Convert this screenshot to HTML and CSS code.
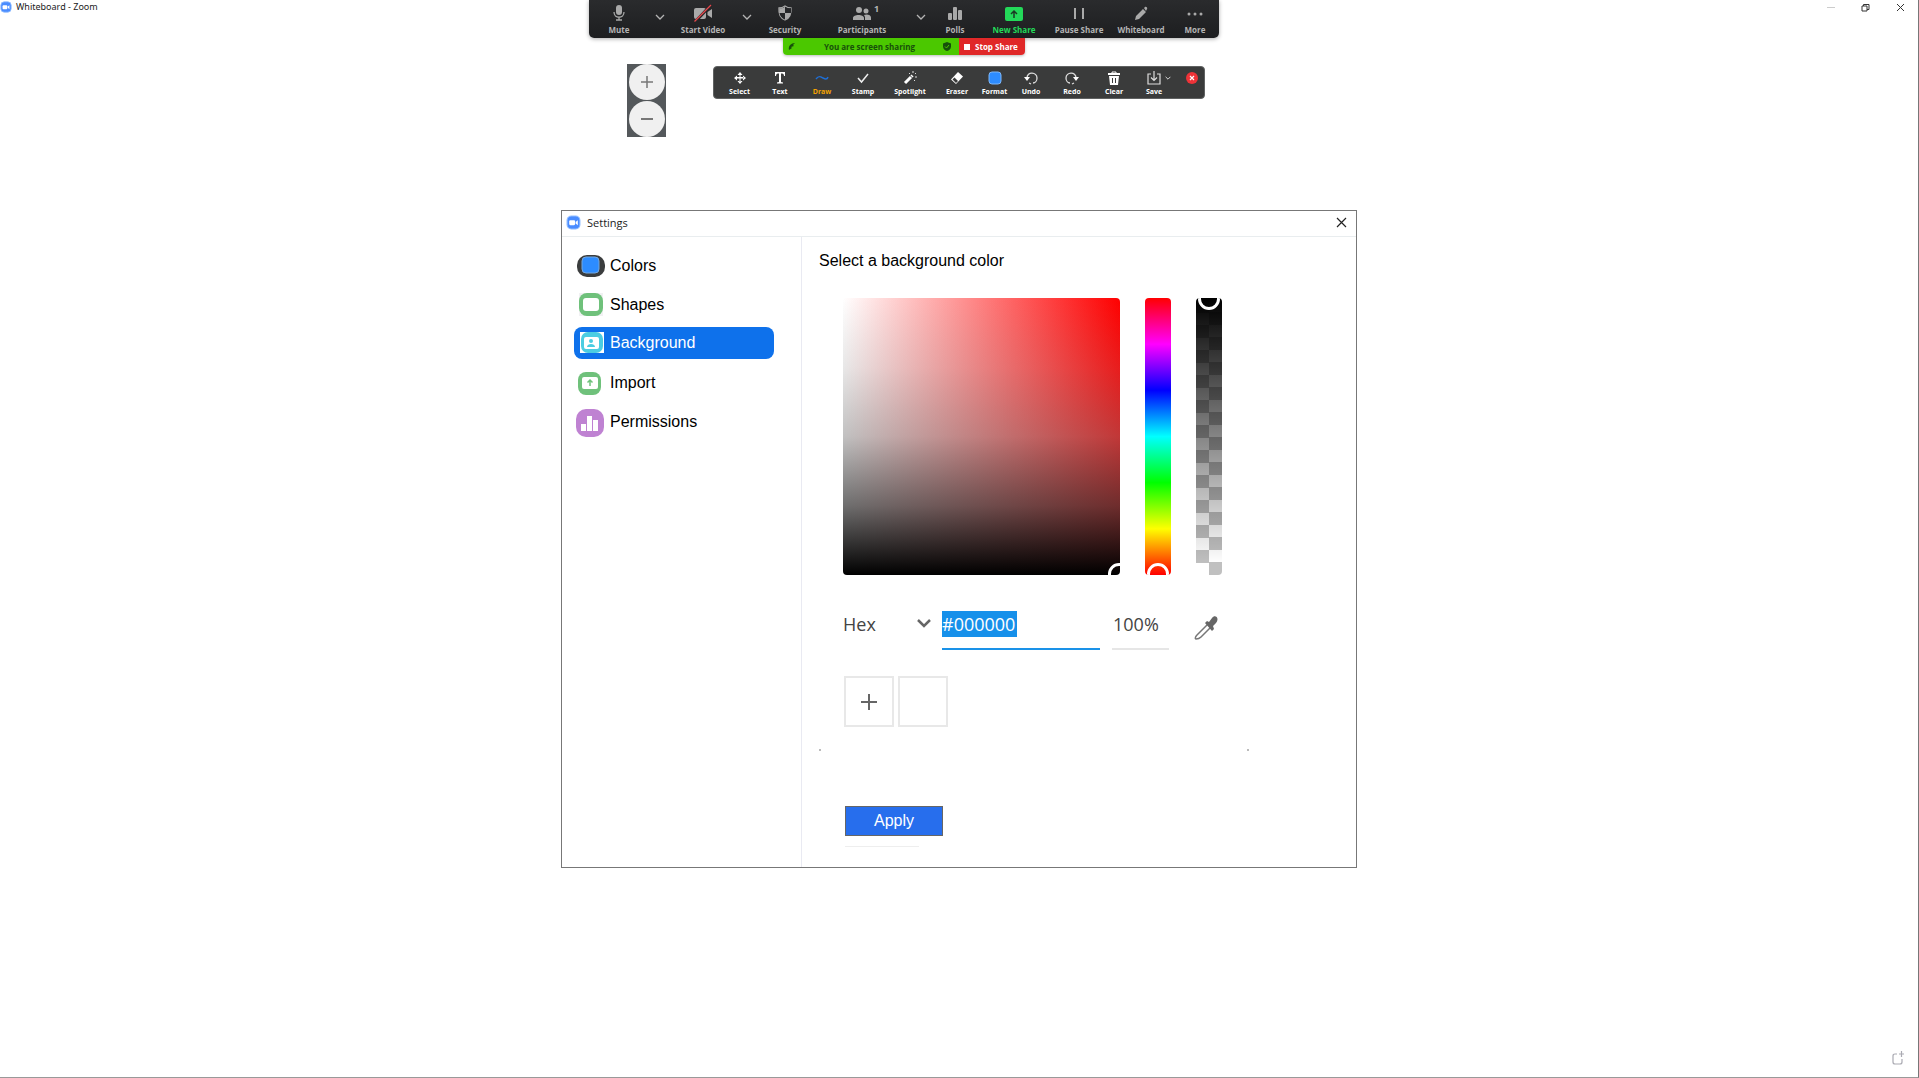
FILE: index.html
```html
<!DOCTYPE html>
<html lang="en">
<head>
<meta charset="utf-8">
<title>Whiteboard - Zoom</title>
<link rel="stylesheet" href="styles.css">
</head>
<body>
<svg class="defs" aria-hidden="true">
  <symbol id="logo" viewBox="0 0 14 14"><rect x="1" y="1" width="12" height="12" rx="4" fill="#4a8cff" stroke="#8fbcff"/><rect x="3" y="5" width="5.500" height="4.500" rx="1" fill="#fff"/><path d="M9 6.500 11 5v4.500L9 8z" fill="#fff"/></symbol>
  <symbol id="chevron" viewBox="0 0 10 6"><path d="M1 1l4 4 4-4" fill="none" stroke="currentColor" stroke-width="1.300"/></symbol>
</svg>

<header class="window-bar">
  <div class="window-title"><svg class="logo-small"><use href="#logo"/></svg><span>Whiteboard - Zoom</span></div>
  <div class="window-actions">
    <button class="faded" aria-label="Minimize"><svg width="8" height="8"><path d="M0 4.500h8" stroke="#ccc"/></svg></button>
    <button aria-label="Restore"><svg width="9" height="9" fill="none" stroke="#333"><path d="M1 3h5v5H1zM2.500 3V1.500h5.500v5H6"/></svg></button>
    <button aria-label="Close"><svg width="9" height="9" stroke="#333"><path d="M1 1l7 7M8 1 1 8"/></svg></button>
  </div>
</header>

<div class="meeting">
  <nav class="meeting-bar" aria-label="Meeting controls">
    <button><svg width="14" height="18" viewBox="0 0 14 18"><rect x="4" y="1" width="6" height="10" rx="3" fill="#a9a9a9"/><path d="M2 8c0 7 10 7 10 0M7 13v3M4 16h6" fill="none" stroke="#a9a9a9" stroke-width="1.300"/></svg><span>Mute</span></button>
    <button class="expand" aria-label="Audio options"><svg width="10" height="6"><use href="#chevron"/></svg></button>
    <button><svg width="20" height="18" viewBox="0 0 20 18"><rect x="1" y="4" width="12" height="11" rx="2" fill="#a9a9a9"/><path d="M14.500 8 19 5v9l-4.500-3z" fill="#a9a9a9"/><path d="M2 18 18 1" stroke="#252628" stroke-width="3"/><path d="M1.500 17.500 18 1" stroke="#e5484d" stroke-width="1.300"/></svg><span>Start Video</span></button>
    <button class="expand" aria-label="Video options"><svg width="10" height="6"><use href="#chevron"/></svg></button>
    <button><svg width="16" height="18" viewBox="0 0 16 18"><path d="M8 2c2 1.500 4 2 6 2 .5 6-1 10-6 12C3 14 1.500 10 2 4c2 0 4-.500 6-2z" fill="none" stroke="#a9a9a9" stroke-width="1.300"/><path d="M8 3v6h5.500c-.5 3-2 5-5.500 6.500zM8 9H2.500V4.500C5 4.500 6.500 4 8 3z" fill="#a9a9a9"/><path d="M8 3v6h6V4C11 4.500 9.500 4 8 3zM2.500 9H8v6.500C4.500 14 3 12 2.500 9z" fill="#252628"/><path d="M8 3v6H2.500V4.500C5 4.500 6.500 4 8 3zM8 9h5.500c-.5 3-2 5-5.500 6.500z" fill="#a9a9a9"/></svg><span>Security</span></button>
    <button class="people"><svg width="20" height="18" viewBox="0 0 20 18" fill="#a9a9a9"><circle cx="7" cy="6" r="3"/><circle cx="14" cy="7" r="2.500"/><path d="M1 16v-2c0-4 11-4 11 0v2zM13 16v-3l-1-2c3-1.500 7 0 7 2.500V16z"/></svg><span>Participants</span><sup>1</sup></button>
    <button class="expand" aria-label="Participant options"><svg width="10" height="6"><use href="#chevron"/></svg></button>
    <button><svg width="16" height="18" viewBox="0 0 16 18" fill="#a9a9a9"><rect x="1" y="9" width="4" height="7" rx="1"/><rect x="6" y="3" width="4" height="13" rx="1"/><rect x="11" y="6" width="4" height="10" rx="1"/></svg><span>Polls</span></button>
    <button class="share"><svg width="18" height="18" viewBox="0 0 18 18"><rect y="3" width="18" height="14" rx="2" fill="#23d959"/><path d="M9 14V7M6 10l3-3 3 3" fill="none" stroke="#1b3a24" stroke-width="1.500"/></svg><span>New Share</span></button>
    <button><svg width="14" height="18" fill="#a9a9a9"><rect x="2" y="4" width="2" height="11"/><rect x="10" y="4" width="2" height="11"/></svg><span>Pause Share</span></button>
    <button><svg width="14" height="18" viewBox="0 0 14 18" fill="#a9a9a9"><path d="M1 16l1-4 7-7 3 3-7 7zM10 4l1-1c1-1 3 1 2 2l-1 2z"/></svg><span>Whiteboard</span></button>
    <button><svg width="16" height="18" fill="#a9a9a9"><circle cx="2" cy="10" r="1.500"/><circle cx="8" cy="10" r="1.500"/><circle cx="14" cy="10" r="1.500"/></svg><span>More</span></button>
  </nav>
  <div class="share-status">
    <div class="sharing"><svg width="8" height="9"><path d="M1 8C0 4 3 1 7 1L5 3l1 1-3 1 1 1z" fill="#17500b"/></svg><span>You are screen sharing</span><svg width="8" height="9"><path d="M4 0l4 1.500v3C8 7 6 8.500 4 9 2 8.500 0 7 0 4.500v-3z" fill="#17500b"/><path d="M2 4.500 3.500 6 6 3" fill="none" stroke="#4bc800"/></svg></div>
    <button class="stop"><i></i>Stop Share</button>
  </div>
</div>

<nav class="annotate-bar" aria-label="Annotation tools">
  <button><svg width="14" height="14" viewBox="0 0 14 14" fill="#fff"><path d="M7 1l2.500 3h-5zM7 13l2.500-3h-5zM1 7l3-2.500v5zM13 7l-3-2.500v5zM6.500 3h1v3h3v1.500h-3v3h-1v-3h-3V6h3z"/></svg><span>Select</span></button>
  <button><svg width="14" height="14" viewBox="0 0 14 14" fill="#fff"><path d="M2 1h10v4h-1c0-2-1-2.500-3-2.500V11l2 .500v1H4v-1l2-.500V2.500C4 2.500 3 3 3 5H2z"/></svg><span>Text</span></button>
  <button class="current"><svg width="14" height="14"><path d="M1 8c3-4 5-2 7-1s4 2 5-1" fill="none" stroke="#1f6fd6" stroke-width="1.500"/></svg><span>Draw</span></button>
  <button><svg width="14" height="14"><path d="M2 7l3.500 4L12 3" fill="none" stroke="#eee" stroke-width="1.500"/></svg><span>Stamp</span></button>
  <button><svg width="14" height="14" viewBox="0 0 14 14"><path d="M2 12l6-6" stroke="#fff" stroke-width="3"/><path d="M8.500 5.500l1-1" stroke="#fff" stroke-width="3"/><path d="M6 2l1 1M10 0v2M13 2l-1 1M12 6h2M11 9l1 1" stroke="#ddd"/></svg><span>Spotlight</span></button>
  <button><svg width="14" height="14" viewBox="0 0 14 14"><path d="M1 8.500 8 1l5 4.500L6 13z" fill="#fff"/><path d="M2.500 8.500 4.500 6.500 8 10l-2 2z" fill="#3a3b3b"/></svg><span>Eraser</span></button>
  <button><svg width="14" height="14"><rect x="1" y="1" width="12" height="12" rx="3" fill="#2d8cff" stroke="#7db6f7"/></svg><span>Format</span></button>
  <button><svg width="14" height="14"><path d="M3 7c0-7 10-6 10 0 0 3-2 5-4 5M5 12l2 1" fill="none" stroke="#ddd" stroke-width="1.300"/><path d="M0 6h6l-3 4z" fill="#fff"/></svg><span>Undo</span></button>
  <button><svg width="14" height="14"><path d="M11 7C11 0 1 1 1 7c0 3 2 5 4 5M9 12l-2 1" fill="none" stroke="#ddd" stroke-width="1.300"/><path d="M8 6h6l-3 4z" fill="#fff"/></svg><span>Redo</span></button>
  <button><svg width="14" height="14"><path d="M5 2V1h4v1" fill="none" stroke="#fff"/><path d="M1 2h12v2H1zM2 5h10l-1 9H3z" fill="#fff"/><path d="M5.500 7v5M8.500 7v5" stroke="#3a3b3b"/></svg><span>Clear</span></button>
  <button class="save"><svg width="14" height="14"><path d="M4 3H1v10h12V3h-3M7 0v9M4 6.500l3 3 3-3" fill="none" stroke="#ddd" stroke-width="1.200"/></svg><span>Save</span><svg class="save-more" width="6" height="4"><use href="#chevron"/></svg></button>
  <button class="close-tools" aria-label="Close annotation tools"><svg width="12" height="12"><circle cx="6" cy="6" r="6" fill="#ee3338"/><path d="M4 4l4 4M8 4 4 8" stroke="#fff" stroke-width="1.200"/></svg></button>
</nav>

<div class="zoom-control">
  <button aria-label="Zoom in"><svg width="12" height="12"><path d="M0 6h12M6 0v12" stroke="#777" stroke-width="1.500"/></svg></button>
  <button aria-label="Zoom out"><svg width="12" height="12"><path d="M0 6h12" stroke="#777" stroke-width="2"/></svg></button>
</div>

<main class="dialog" role="dialog" aria-labelledby="dialog-title">
  <header class="dialog-bar">
    <svg class="logo"><use href="#logo"/></svg>
    <h1 id="dialog-title">Settings</h1>
    <button class="dialog-close" aria-label="Close settings"><svg width="11" height="11"><path d="M1 1l9 9M10 1l-9 9" stroke="#222" stroke-width="1.200"/></svg></button>
  </header>
  <div class="dialog-body">
    <nav class="sections" aria-label="Settings sections">
      <button><svg width="30" height="30"><rect x="1" y="4" width="28" height="22" rx="10" fill="#3b3d3e"/><rect x="6" y="6" width="17" height="16" rx="4" fill="#2d8cff" stroke="#75a7dd"/></svg>Colors</button>
      <button><svg width="30" height="30"><rect x="3" y="3" width="24" height="23" fill="#f1f1f3"/><rect x="3" y="3" width="24" height="23" rx="8" fill="#6fc17b"/><rect x="7" y="8" width="16" height="13" rx="3" fill="#fff"/></svg>Shapes</button>
      <button class="selected"><svg width="30" height="30"><rect x="4" y="4" width="24" height="21" fill="#fff"/><rect x="5" y="4" width="22" height="21" rx="7" fill="#4bcde2"/><rect x="8" y="9" width="15" height="12" rx="2" fill="#fff"/><circle cx="15" cy="13" r="2" fill="#4bcde2"/><path d="M11 19c0-4 8-4 8 0z" fill="#4bcde2"/></svg>Background</button>
      <button><svg width="30" height="30"><rect x="2" y="4" width="23" height="23" rx="8" fill="#6fc17b"/><rect x="6" y="9" width="16" height="12" rx="2" fill="#fff"/><path d="M14 18v-5M11.500 14.500 14 12l2.500 2.500" fill="none" stroke="#6fc17b" stroke-width="1.500"/></svg>Import</button>
      <button><svg width="30" height="30"><rect x="0" y="2" width="28" height="28" rx="10" fill="#bf82d2"/><path d="M5 17h5v7H5zM11 9h5v15h-5zM17 13h5v11h-5z" fill="#fff"/></svg>Permissions</button>
    </nav>
    <section class="panel">
      <h2>Select a background color</h2>
      <div class="picker">
        <div class="spectrum"><div class="shade"><i class="ring"></i></div>
          <div class="slider hue"><input type="range" min="0" max="360" value="0" aria-label="Hue"></div>
          <div class="slider alpha"><input type="range" min="0" max="100" value="100" aria-label="Opacity"></div>
        </div>
        <div class="values">
          <div class="format"><select aria-label="Color format"><option>Hex</option></select><svg width="14" height="9" viewBox="0 0 14 9"><path d="M1 1l6 6 6-6" fill="none" stroke="#666" stroke-width="2.500"/></svg></div>
          <div class="code"><input type="text" value="#000000" aria-label="Color code"></div>
          <div class="opacity"><input type="text" value="100%" aria-label="Opacity percent"></div>
          <button class="dropper" aria-label="Pick a color"><svg width="24" height="26" viewBox="0 0 24 26"><path d="M14 9 3 20c-2 2-2 4-1 4s3 0 5-2l10-10" fill="none" stroke="#777" stroke-width="1.500"/><path d="M11 8l2-2 2 1 3-4c3-4 8 0 4 5l-3 3 1 3-2 2z" fill="#666"/></svg></button>
        </div>
        <div class="swatches">
          <button aria-label="Add color"><svg width="16" height="16"><path d="M0 8h16M8 0v16" stroke="#666" stroke-width="2"/></svg></button>
          <button aria-label="White"></button>
        </div>
      </div>
      <button class="apply">Apply</button>
      <hr>
    </section>
  </div>
</main>
<button class="new-page" aria-label="New page"><svg width="14" height="14"><path d="M6 3H4Q2 3 2 5v6q0 2 2 2h5q2 0 2-2V8M10.500 0v6M8 3h5" fill="none" stroke="#aaaab2" stroke-width="1.200"/></svg></button>
</body>
</html>
```
FILE: styles.css
```css
* { box-sizing: border-box; }

body {
  position: relative;
  margin: 0;
  min-height: 100vh;
  background: #fff;
  border-right: 1px solid #777;
  border-bottom: 1px solid #999;
  font-family: "Liberation Sans", Arial, sans-serif;
  font-size: 16px;
  color: #000;
}

button {
  padding: 0;
  border: 0;
  background: none;
  font: inherit;
  color: inherit;
}

svg { display: block; flex: none; }
.defs { position: absolute; width: 0; height: 0; }

/* Window title */
.window-bar {
  display: flex;
  justify-content: space-between;
  height: 14px;
  font: 9px/14px "Noto Sans", sans-serif;
  color: #222;
}
.window-title { display: flex; align-items: center; gap: 4px; }
.logo-small { width: 12px; height: 12px; }
.window-actions { display: flex; align-items: center; gap: 26px; padding-right: 13px; }

/* Meeting controls */
.meeting {
  position: absolute;
  top: 0;
  left: calc(50% - 370px);
  width: 630px;
  font-family: "Open Sans", sans-serif;
  font-weight: 700;
}
.meeting-bar {
  display: grid;
  grid-template-columns: 60px 22px 64px 24px 52px 102px 16px 52px 66px 64px 60px 48px;
  height: 38px;
  background: linear-gradient(#2a2b2d, #1d1e20);
  border-radius: 0 0 5px 5px;
  box-shadow: 0 1px 4px #0005;
  color: #b4b4b4;
  font-size: 8px;
  line-height: 10px;
}
.meeting-bar button {
  position: relative;
  display: flex;
  flex-direction: column;
  align-items: center;
  gap: 3px;
  padding-top: 4px;
  white-space: nowrap;
}
.meeting-bar .expand { padding-top: 14px; }
.meeting-bar .share { color: #23d959; }
.people sup { position: absolute; top: 4px; left: 63px; font-size: 9px; }
.share-status {
  display: flex;
  width: 242px;
  height: 17px;
  margin-left: 194px;
  border-radius: 0 0 4px 4px;
  overflow: hidden;
  font-size: 8px;
  line-height: 17px;
  box-shadow: 0 1px 3px #0004;
}
.sharing {
  display: flex;
  flex: 1;
  align-items: center;
  justify-content: space-between;
  padding: 0 8px 0 5px;
  background: #4bc800;
  color: #17500b;
}
.stop {
  display: flex;
  align-items: center;
  gap: 5px;
  width: 66px;
  padding-left: 5px;
  background: #e02828;
  color: #fff;
}
.stop i { width: 6px; height: 6px; background: #fff; }

/* Annotation tools */
.annotate-bar {
  position: absolute;
  top: 66px;
  left: calc(50% - 246px);
  display: grid;
  grid-template-columns: 51px 30px 54px 28px 66px 28px 47px 26px 56px 28px 52px 24px;
  height: 33px;
  background: #3a3b3b;
  border: 1px solid #606262;
  border-radius: 4px;
  color: #fff;
  font: 700 7px/10px "Open Sans", sans-serif;
}
.annotate-bar button {
  position: relative;
  display: flex;
  flex-direction: column;
  align-items: center;
  gap: 2px;
  padding-top: 4px;
}
.annotate-bar .current { color: #f5a300; }
.annotate-bar .save-more { position: absolute; top: 9px; left: 37px; }
.annotate-bar .close-tools { padding-top: 5px; }

/* Canvas zoom */
.zoom-control {
  position: absolute;
  top: 64px;
  left: calc(50% - 332px);
  display: grid;
  gap: 1px;
  width: 39px;
  justify-content: center;
  background: #54585b;
}
.zoom-control button {
  display: grid;
  place-items: center;
  width: 36px;
  height: 36px;
  border-radius: 50%;
  background: #f0f0f0;
}

/* Settings dialog */
.dialog {
  width: 796px;
  max-width: 100%;
  margin: 196px auto 0;
  border: 1px solid #777;
  background: #fff;
}
.dialog-bar {
  display: flex;
  align-items: center;
  gap: 6px;
  height: 26px;
  padding: 0 9px 2px 4px;
  border-bottom: 1px solid #e9edef;
}
.logo { width: 15px; height: 15px; }
.dialog-bar h1 { margin: 0; font: 11px/16px "Open Sans", sans-serif; color: #222; }
.dialog-close { margin-left: auto; }
.dialog-body { display: flex; }
.sections {
  display: flex;
  flex-direction: column;
  gap: 7px;
  width: 240px;
  padding: 12px 27px 12px 12px;
  border-right: 1px solid #e9eaf2;
}
.sections button {
  display: flex;
  align-items: center;
  gap: 4px;
  height: 32px;
  padding: 2px 0 0 2px;
  border-radius: 8px;
  text-align: left;
}
.sections .selected { padding-top: 0; background: #0e71eb; color: #fff; }
.panel { flex: 1; padding: 15px 17px 20px; }
.panel h2 { margin: 0; font-size: 16px; font-weight: 400; line-height: 18px; }

/* Color picker; the small marks show the corners of its area */
.picker {
  width: 430px;
  padding: 28px 0 24px 24px;
  background:
    linear-gradient(#bbb, #bbb) left bottom / 2px 2px no-repeat,
    linear-gradient(#bbb, #bbb) right bottom / 2px 2px no-repeat;
}
.spectrum { display: flex; gap: 25px; }
.shade {
  position: relative;
  width: 277px;
  height: 277px;
  border-radius: 4px;
  overflow: hidden;
  background:
    linear-gradient(
      rgb(140 140 140 / 0),
      rgb(140 140 140 / .2) 25%,
      rgb(120 120 120 / .46) 50%,
      rgb(60 60 60 / .74) 75%,
      #000),
    linear-gradient(to right, #fff, #f00);
}
.ring {
  position: absolute;
  right: -10px;
  bottom: -10px;
  width: 22px;
  height: 22px;
  border: 3px solid #fff;
  border-radius: 50%;
}
.slider { width: 26px; height: 277px; border-radius: 4px; overflow: hidden; }
.hue { background: linear-gradient(#f00, #f0f, #00f, #0ff, #0f0, #ff0, #f00); }
.alpha {
  background:
    linear-gradient(#000, transparent 96%),
    conic-gradient(#fff 0 25%, #c0c0c0 0 50%, #fff 0 75%, #c0c0c0 0) left bottom / 26px 25px;
}
.slider input {
  display: block;
  appearance: none;
  writing-mode: vertical-lr;
  direction: rtl;
  width: 26px;
  height: 297px;
  margin: -10px 0;
  padding: 0 2px;
  background: none;
}
.slider input::-webkit-slider-thumb {
  appearance: none;
  width: 22px;
  height: 22px;
  border: 3px solid #fff;
  border-radius: 50%;
  background: transparent;
}
.values {
  display: flex;
  height: 39px;
  margin-top: 36px;
  font: 18px/26px "Open Sans", sans-serif;
  color: #444;
}
.values input, .values select {
  display: block;
  width: 100%;
  height: 26px;
  padding: 0;
  border: 0;
  appearance: none;
  background: none;
  font: inherit;
  color: inherit;
}
.format { position: relative; width: 99px; }
.format svg { position: absolute; right: 11px; top: 8px; pointer-events: none; }
.code { width: 158px; border-bottom: 2px solid #1a92e8; }
.code input { width: 75px; background: #1690ea; color: #fff; }
.opacity { width: 57px; margin: 0 25px 0 12px; border-bottom: 2px solid #e6e6e6; }
.opacity input { padding-left: 1px; }
.dropper { align-self: flex-start; padding-top: 4px; }
.swatches { display: flex; gap: 4px; padding: 26px 0 0 1px; }
.swatches button {
  display: grid;
  place-items: center;
  width: 50px;
  height: 51px;
  border: 2px solid #e8e8e8;
}
.apply {
  display: block;
  width: 98px;
  height: 30px;
  margin: 55px 0 0 26px;
  border: 1px solid #666;
  background: #276eed;
  color: #fff;
}
hr { width: 74px; margin: 10px 0 0 26px; border: 0; border-top: 1px solid #eee; }

.new-page { position: absolute; right: 13px; bottom: 12px; }
```
